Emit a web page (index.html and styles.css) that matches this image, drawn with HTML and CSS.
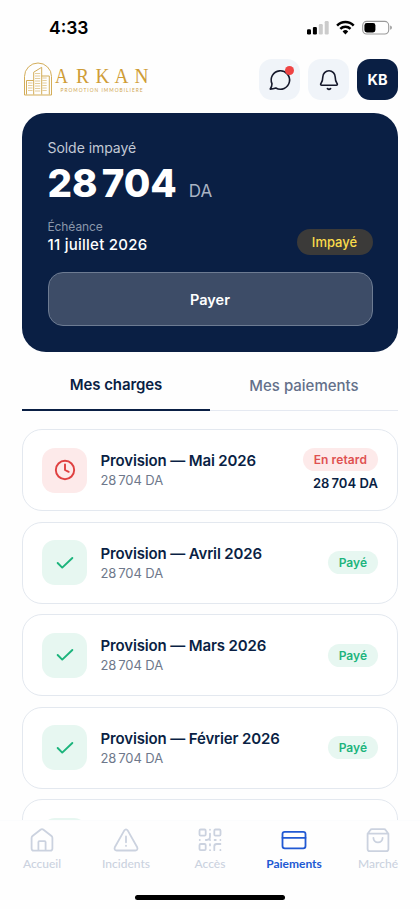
FILE: index.html
```html
<!DOCTYPE html>
<html lang="fr">
<head>
<meta charset="utf-8">
<meta name="viewport" content="width=device-width, initial-scale=1">
<title>Arkan – Paiements</title>
<link rel="stylesheet" href="styles.css">
</head>
<body>
<div class="screen">
  <div class="status">
    <span class="time">4:33</span>
    <svg class="status-icons" width="86" height="16" viewBox="0 0 86 16">
      <rect x="0" y="9.2" width="4" height="5.2" rx="1.2"/>
      <rect x="5.9" y="6.9" width="4" height="7.5" rx="1.2"/>
      <rect x="11.8" y="4" width="4" height="10.4" rx="1.2" fill="#ccc"/>
      <rect x="17.7" y="1" width="4" height="13.4" rx="1.2" fill="#ccc"/>
      <g fill="none" stroke="#000" stroke-width="2.5">
        <path d="M30.1 5.600a11.600 11.600 0 0 1 16.600 0"/>
        <path d="M33.3 8.9a7.2 7.2 0 0 1 10.2 0"/>
      </g>
      <path d="M35.6 11.4a4 4 0 0 1 5.6 0l-2.8 3z"/>
      <rect x="55.7" y="1.4" width="26" height="12.6" rx="4" fill="none" stroke="#999" stroke-width="1.1"/>
      <rect x="57.4" y="3" width="11" height="9.4" rx="2.4"/>
      <path d="M83.2 5.6q1.7.6 1.7 2.1t-1.7 2.1z" fill="#999"/>
    </svg>
  </div>

  <header class="header">
    <svg class="logo" width="128" height="36" viewBox="0 0 128 36" fill="none" stroke="#d3ad59" stroke-width="1">
      <path d="M2.500 34v-18.500a13.500 13.500 0 0 1 27 0v18.500z"/>
      <path d="M4.500 33.500V19.500h7.200M11.700 33.500V11.200l8-4.900v27.200M19.700 15h7.600v18.500"/>
      <path stroke-width=".8" opacity=".75" d="M6 22h4.500m-4.500 2.500h4.500m-4.500 2.500h4.500m-4.500 2.500h4.500m2.500-17h5.200m-5.200 2.500h5.200m-5.200 2.500h5.200m-5.200 2.500h5.200m-5.200 2.500h5.200m-5.200 2.500h5.200m-5.200 2.500h5.200m-5.200 2.500h5.200m2.200-13h4.300m-4.300 2.500h4.300m-4.300 2.500h4.300m-4.300 2.500h4.300m-4.300 2.500h4.300m-4.300 2.500h4.300"/>
      <g class="logo-name">
        <text x="33" y="22" textLength="13" lengthAdjust="spacingAndGlyphs">A</text>
        <text x="54" y="22" textLength="13" lengthAdjust="spacingAndGlyphs">R</text>
        <text x="73.500" y="22" textLength="14" lengthAdjust="spacingAndGlyphs">K</text>
        <text x="92.500" y="22" textLength="14" lengthAdjust="spacingAndGlyphs">A</text>
        <text x="112.500" y="22" textLength="14" lengthAdjust="spacingAndGlyphs">N</text>
      </g>
      <text class="logo-sub" x="38.500" y="31" textLength="82">PROMOTION IMMOBILIERE</text>
    </svg>
    <div class="actions">
      <div class="action">
        <svg width="24" height="24" viewBox="0 0 24 24"><path d="M4 15.800A9.200 9.200 0 1 1 7.800 20Q5.200 21.100 2.200 21.100 4 18.700 4 15.800Z"/></svg>
        <i class="dot"></i>
      </div>
      <div class="action">
        <svg width="24" height="24" viewBox="0 0 24 24"><path d="M5.800 9a6.200 6.200 0 0 1 12.400 0c0 4 .8 5 1.900 6.500.6.900.2 1.700-.8 1.700H4.700c-1 0-1.400-.8-.8-1.700C5 14 5.800 13 5.800 9zM10.400 20.600q1.600 1.400 3.200 0"/></svg>
      </div>
      <div class="avatar">KB</div>
    </div>
  </header>

  <section class="balance">
    <div class="balance-label">Solde impayé</div>
    <div class="amount"><b>28<i></i>704</b><span>DA</span></div>
    <div class="due">
      <div>
        <div class="due-label">Échéance</div>
        <div class="due-date">11 juillet 2026</div>
      </div>
      <span class="unpaid">Impayé</span>
    </div>
    <div class="pay">Payer</div>
  </section>

  <nav class="tabs">
    <div class="tab active"><span>Mes charges</span></div>
    <div class="tab"><span>Mes paiements</span></div>
  </nav>

  <main class="list">
    <article class="item late">
      <div class="item-icon"><svg width="24" height="24" viewBox="0 0 24 24"><circle cx="12" cy="12" r="10"/><path d="M12 6V12l4 2"/></svg></div>
      <div class="item-text"><div class="item-title">Provision — Mai 2026</div><div class="item-sub">28<i></i>704 DA</div></div>
      <div class="item-side"><span class="pill">En retard</span><span class="item-amount">28<i></i>704 DA</span></div>
    </article>
    <article class="item">
      <div class="item-icon"><svg width="24" height="24" viewBox="0 0 24 24"><path d="m4 12 5 5L20 6.500"/></svg></div>
      <div class="item-text"><div class="item-title">Provision — Avril 2026</div><div class="item-sub">28<i></i>704 DA</div></div>
      <div class="item-side"><span class="pill">Payé</span></div>
    </article>
    <article class="item">
      <div class="item-icon"><svg width="24" height="24" viewBox="0 0 24 24"><path d="m4 12 5 5L20 6.500"/></svg></div>
      <div class="item-text"><div class="item-title">Provision — Mars 2026</div><div class="item-sub">28<i></i>704 DA</div></div>
      <div class="item-side"><span class="pill">Payé</span></div>
    </article>
    <article class="item">
      <div class="item-icon"><svg width="24" height="24" viewBox="0 0 24 24"><path d="m4 12 5 5L20 6.500"/></svg></div>
      <div class="item-text"><div class="item-title">Provision — Février 2026</div><div class="item-sub">28<i></i>704 DA</div></div>
      <div class="item-side"><span class="pill">Payé</span></div>
    </article>
    <article class="item">
      <div class="item-icon"></div>
    </article>
  </main>

  <footer class="bottom">
    <div class="nav">
      <div class="nav-item">
        <svg width="26" height="26" viewBox="0 0 26 26"><path d="M2.600 11q0-1.200.9-2l8-6.300q1.500-1.100 3 0l8 6.300q.9.800.9 2v10.500q0 2.200-2.200 2.200H4.800q-2.200 0-2.200-2.200zM9.400 23.500v-8.300q0-1 1-1h5.200q1 0 1 1v8.300"/></svg>
        <span>Accueil</span>
      </div>
      <div class="nav-item">
        <svg width="26" height="26" viewBox="0 0 26 26"><path d="M11.200 3.600q1.800-2.400 3.600 0l9.400 16.600q1 3.200-2 3.300H3.800q-3-.1-2-3.300zM13 9.500v5.800M13 18.600v.3"/></svg>
        <span>Incidents</span>
      </div>
      <div class="nav-item">
        <svg width="26" height="26" viewBox="0 0 26 26"><rect x="2.500" y="2.500" width="6.200" height="6.200" rx="1.200"/><rect x="17.300" y="2.500" width="6.200" height="6.200" rx="1.200"/><rect x="2.500" y="17" width="6.200" height="6.200" rx="1.200"/><path d="M13 2.700v.1M13 6.600v3q0 3.400-3.400 3.400h-.8M2.700 13h.1M13 13h.1M17.600 13h1.200M23.400 13v.1M13 17.200v1.200M13 23.200h.1M23.400 17h-3.700q-2.400 0-2.400 2.400v3.800M23.400 23v.2"/></svg>
        <span>Accès</span>
      </div>
      <div class="nav-item current">
        <svg width="26" height="26" viewBox="0 0 26 26"><rect x="1.500" y="4.800" width="23" height="16.500" rx="2.300"/><path d="M1.500 10.800h23"/></svg>
        <span>Paiements</span>
      </div>
      <div class="nav-item">
        <svg width="26" height="26" viewBox="0 0 26 26"><path d="M2.600 6.700 5.200 3.200q.6-1 1.800-1h12q1.200 0 1.800 1l2.600 3.500v15.300q0 2.200-2.200 2.200H4.800q-2.200 0-2.200-2.200zM2.600 6.700h20.800M8.400 10.800a4.600 4.600 0 0 0 9.200 0"/></svg>
        <span>Marché</span>
      </div>
    </div>
    <div class="home-bar"></div>
  </footer>
</div>
</body>
</html>
```
FILE: styles.css
```css
* { box-sizing: border-box; }
body { margin: 0; background: #fefefe; font-family: Inter, "Liberation Sans", sans-serif; color: #0a1f44; }
.screen { width: 420px; height: 909px; overflow: hidden; display: flex; flex-direction: column; background: #fefefe; }
.status { height: 59px; flex: none; display: flex; justify-content: space-between; padding: 17px 27.500px 0 49px; color: #000; }
.time { font-size: 17.500px; line-height: 22px; font-weight: 600; }
.status-icons { margin-top: 3px; }

.header { height: 41px; flex: none; display: flex; justify-content: space-between; padding: 0 22px; }
.logo { margin-top: 2px; }
.logo-name { font: 21.500px "Liberation Serif", serif; fill: #cf9d37; stroke: none; }
.logo-sub { font: 4.800px Lato, sans-serif; fill: #d0a650; stroke: none; }
.actions { display: flex; gap: 8px; }
.action, .avatar { width: 41px; height: 41px; border-radius: 13px; display: flex; align-items: center; justify-content: center; position: relative; }
.action { background: #f0f4f9; }
.action svg { fill: none; stroke: #15182b; stroke-width: 1.600; stroke-linecap: round; stroke-linejoin: round; }
.dot { position: absolute; top: 6.500px; right: 6.500px; width: 9px; height: 9px; border-radius: 50%; background: #ef4444; }
.avatar { background: #0a1f44; color: #fff; font-size: 14.500px; font-weight: 700; }

.balance { flex: none; height: 239px; margin: 13px 22px 0; padding: 25.500px; background: #0a1f44; border-radius: 24px; color: #fff; }
.balance-label { font-size: 14px; line-height: 18px; color: #c2c9d5; letter-spacing: -.05px; }
.amount { height: 44px; margin-top: 4.500px; display: flex; align-items: baseline; gap: 12px; line-height: 44px; }
.amount b { font-size: 38.500px; font-weight: 800; }
.amount i { display: inline-block; width: 4px; }
.amount span { font-size: 17px; color: #aab3c3; }
.due { display: flex; justify-content: space-between; align-items: flex-end; margin-top: 14px; height: 36px; }
.due-label { font-size: 12px; line-height: 16px; letter-spacing: -.1px; color: #8b97ab; }
.due-date { font-size: 15px; line-height: 20px; font-weight: 500; letter-spacing: .25px; }
.unpaid { width: 76px; height: 26px; border-radius: 13px; background: #3b3a39; color: #fbdc4b; font-size: 13px; font-weight: 500; line-height: 26px; text-align: center; }
.pay { margin-top: 17px; height: 54px; border: 1px solid #6d7b92; border-radius: 15px; background: #3d4c67; font-size: 14.500px; font-weight: 600; line-height: 53px; text-align: center; }

.tabs { flex: none; height: 59px; margin: 0 22px; display: flex; border-bottom: 1px solid #e5e9f1; }
.tab { flex: 1; height: 59px; line-height: 67px; text-align: center; font-size: 15px; font-weight: 500; color: #64708a; border-bottom: 2px solid transparent; }
.tab.active { color: #0a1f44; border-color: #0a1f44; font-weight: 600; line-height: 66px; letter-spacing: -.1px; }

.list { flex: 1; min-height: 0; overflow: hidden; margin: 18px 22px 0; display: flex; flex-direction: column; gap: 10.600px; }
.item { flex: none; height: 82px; border: 1px solid #e3e8ef; border-radius: 20px; display: flex; align-items: center; padding: 0 19px; background: #fff; }
.item-icon { width: 45px; height: 45px; border-radius: 13px; background: #e7f7f1; color: #1cb47c; display: flex; align-items: center; justify-content: center; }
.item-icon svg { width: 22px; height: 22px; fill: none; stroke: currentColor; stroke-width: 2.100; stroke-linecap: round; stroke-linejoin: round; }
.late .item-icon { background: #fdeaea; color: #df4040; }
.item-text { margin-left: 13.500px; flex: 1; }
.item-title { font-size: 15px; line-height: 20px; font-weight: 600; letter-spacing: -.14px; }
.item-sub { font-size: 13px; line-height: 18px; letter-spacing: -.1px; color: #6e788b; }
.item-sub i, .item-amount i { display: inline-block; width: 2px; }
.item-side { display: flex; flex-direction: column; align-items: flex-end; gap: 3px; }
.pill { height: 23px; padding: 0 11px; border-radius: 12px; background: #e7f7f1; color: #1cb47c; font-size: 12px; font-weight: 600; line-height: 23px; }
.late .pill { background: #fdeaea; color: #df5151; letter-spacing: .1px; }
.item-amount { font-size: 13px; line-height: 18px; font-weight: 600; letter-spacing: .07px; }

.bottom { flex: none; height: 89px; border-top: 1px solid #fbfcfd; background: #fefefe; }
.nav { display: flex; height: 74px; }
.nav-item { flex: 1; display: flex; flex-direction: column; align-items: center; padding-top: 6px; color: #cbd2df; }
.nav-item svg { fill: none; stroke: currentColor; stroke-width: 1.800; stroke-linecap: round; stroke-linejoin: round; }
.nav-item span { font: 500 12px/16px Lato, sans-serif; margin-top: 2.500px; }
.current { color: #2159d3; }
.current span { font-weight: 700; }
.home-bar { width: 150px; height: 5px; border-radius: 3px; background: #000; margin: 0 auto; }
```
